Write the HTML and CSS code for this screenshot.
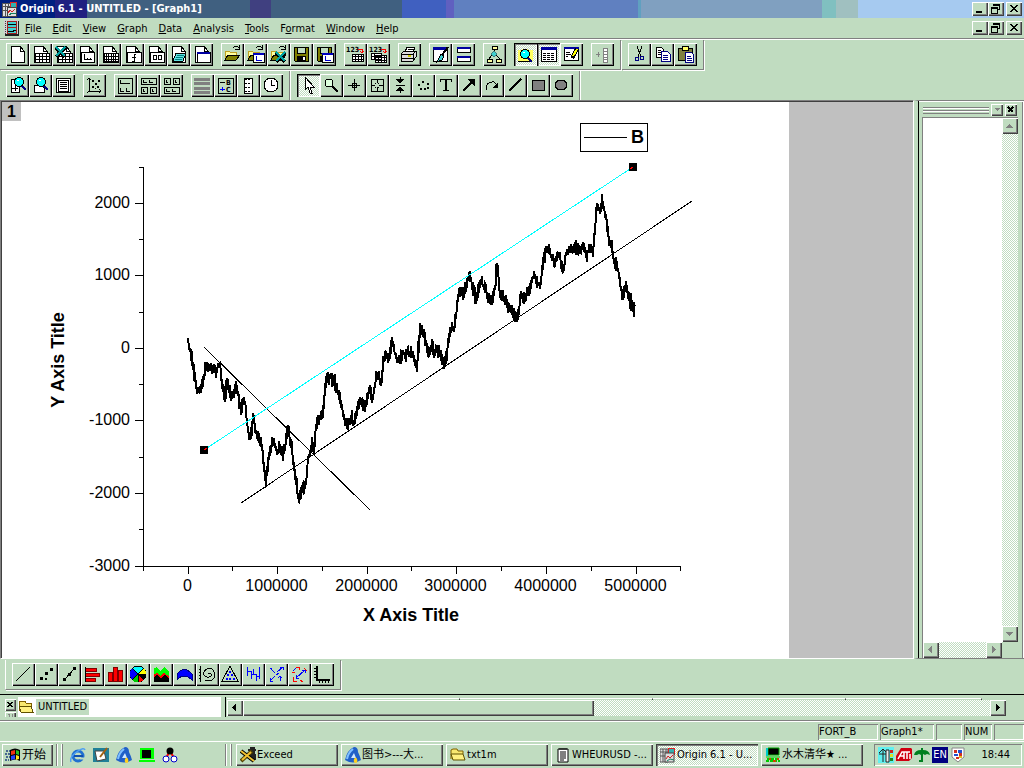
FILE: index.html
```
<!DOCTYPE html>
<html lang="en">
<head>
  <meta charset="UTF-8">
  <title>Origin 6.1 - UNTITLED - [Graph1]</title>
  <link rel="stylesheet" href="styles.css">
</head>
<body>

  <!-- Shared icon shapes -->
  <svg class="sprite" aria-hidden="true">
    <symbol id="page" viewBox="0 0 23 23"><path d="M5 3h9l4 5v11H5z" fill="#fff" stroke="#000"/><path d="M14 3v5h4" fill="none" stroke="#000"/></symbol>
    <symbol id="grid" viewBox="0 0 23 23"><path d="M6 10h14v9H6z" fill="#fff" stroke="#000"/><path d="M6 13h14M6 16h14M10 10v9M13 10v9M17 10v9" stroke="#000"/></symbol>
    <symbol id="folder" viewBox="0 0 23 23"><path d="M4 17V8h4l1 1h6v3" fill="#ffffa0" stroke="#c0a020"/><path d="M4 17l3-5h12l-4 5z" fill="#808000" stroke="#000"/><path d="M12 5q3-4 6 0M18 2v4h-4" fill="none" stroke="#000"/></symbol>
    <symbol id="disk" viewBox="0 0 23 23"><path d="M4 4h14v14H5l-1-1z" fill="#808000" stroke="#000"/><path d="M7 4h8v6H7z" fill="#c0dcc0" stroke="#000"/><path d="M7 13h9v5H7z"/><path d="M13 14h2v3h-2z" fill="#fff"/></symbol>
    <symbol id="plotwin" viewBox="0 0 23 23"><path d="M9 10h11v9H9z" fill="#fff" stroke="#000"/><path d="M9 10h11v2H9z" fill="#0000c0"/><path d="M12 13v4h6" fill="none" stroke="#00c"/></symbol>
    <symbol id="excelx" viewBox="0 0 23 23"><path d="M4 5l9 9M13 5l-9 9" stroke="#000" stroke-width="3"/><path d="M4 4l9 9M13 4l-9 9" stroke="#00a0a0" stroke-width="2"/></symbol>
    <symbol id="lens" viewBox="0 0 23 23"><path d="M15 12l4 4" stroke="#000080" stroke-width="2"/><circle cx="12" cy="8" r="4.500" fill="#0ff" stroke="#000"/><path d="M10 6h2v1h-2z" fill="#fff"/></symbol>
    <symbol id="restore" viewBox="0 0 16 14"><path d="M5 2h6v5h-2M5 2v2" fill="none" stroke="#000"/><path d="M5 2h7v2H5z"/><path d="M3 6h6v5H3z" fill="none" stroke="#000"/><path d="M3 5h7v2H3z"/></symbol>
    <symbol id="cross" viewBox="0 0 16 14"><path d="M4 3l7 7M5 3l7 7M11 3l-7 7M12 3l-7 7" stroke="#000"/></symbol>
    <symbol id="origin" viewBox="0 0 16 16"><path d="M0 2h8v13H0z" fill="#e0e0e0" stroke="#555"/><path d="M0 5h8M0 9h8M3 2v13M6 2v13" stroke="#555"/><path d="M8 1h7v7H8z" fill="#e02020"/><path d="M9 2h5v4H9z" fill="#30b0b0"/><path d="M5 6h9v9H5z" fill="#ddd" stroke="#444"/><path d="M6 12l2-3 2 2 3-3" fill="none" stroke="#d02020"/><path d="M7 14l3-2 4 1" fill="none" stroke="#108060"/></symbol>
    <symbol id="ie" viewBox="0 0 16 16"><circle cx="8" cy="9" r="5" fill="none" stroke="#2070d0" stroke-width="3"/><path d="M4 9h9" stroke="#1050b0" stroke-width="2"/><path d="M10 10.500h6v2h-6z" fill="#c0dcc0"/><path d="M1 15Q-1 10 8 4q6-4 7-1" fill="none" stroke="#50a0f0" stroke-width="1.500"/></symbol>
    <symbol id="tri" viewBox="0 0 16 16"><path d="M9 0q4 0 4 5 2 4 3 8-8 5-16 0Q2 3 9 0z" fill="#2060c8"/><path d="M9 6l2 5H6z" fill="#d0e8ff"/><path d="M8 2Q3 6 2 12" stroke="#80c0ff" stroke-width="2" fill="none"/><path d="M9 12q2-3 3 0t-1 4q-3 0-2-4z" fill="#ffd020"/></symbol>
    <symbol id="openfolder" viewBox="0 0 16 16"><path d="M1 12V3l2-1h4l1 2h5v3" fill="#f8e870" stroke="#806000"/><path d="M3 13L1 7h12l2 6z" fill="#fff080" stroke="#605000"/></symbol>
    <symbol id="terminal" viewBox="0 0 16 16"><path d="M3 1h11v7H3z" fill="#000" stroke="#0a0"/><path d="M1 1h2v8H1z" fill="#0cc"/><path d="M1 10h14" stroke="#0c0"/><path d="M2 12h12M1 14h14" stroke="#0c0" stroke-width="2" stroke-dasharray="3 1"/><path d="M4 12h2M8 14h3M12 12h2" stroke="#c40" stroke-width="2"/></symbol>
  </svg>

  <header class="titlebar">
    <svg class="icon16"><use href="#origin"/></svg>
    <h1>Origin 6.1 - UNTITLED - [Graph1]</h1>
    <div class="winbtns">
      <button aria-label="Minimize"><svg viewBox="0 0 16 14"><path d="M4 9h6v2H4z"/></svg></button>
      <button aria-label="Restore"><svg><use href="#restore"/></svg></button>
      <button class="close" aria-label="Close"><svg><use href="#cross"/></svg></button>
    </div>
  </header>

  <nav class="menubar">
    <svg class="icon16" viewBox="0 0 16 16"><path d="M1 1h15v15H1z" fill="#202020"/><path d="M0 0h14v14H0z" fill="#d0d0d0"/><path d="M3 1h10v13H3z" fill="#a02020"/><path d="M4 2h8v5H4zM4 8h8v5H4z" fill="#40d0d0"/><path d="M4 5l3-1 2 1 3-1M4 11l3 1 5-2" fill="none" stroke="#000"/><path d="M1 1v13" stroke="#404040" stroke-dasharray="1 1"/></svg>
    <button><u>F</u>ile</button>
    <button><u>E</u>dit</button>
    <button><u>V</u>iew</button>
    <button><u>G</u>raph</button>
    <button><u>D</u>ata</button>
    <button><u>A</u>nalysis</button>
    <button><u>T</u>ools</button>
    <button>F<u>o</u>rmat</button>
    <button><u>W</u>indow</button>
    <button><u>H</u>elp</button>
    <div class="winbtns">
      <button aria-label="Minimize graph"><svg viewBox="0 0 16 14"><path d="M4 9h6v2H4z"/></svg></button>
      <button aria-label="Restore graph"><svg><use href="#restore"/></svg></button>
      <button class="close" aria-label="Close graph"><svg><use href="#cross"/></svg></button>
    </div>
  </nav>

  <!-- Standard + edit toolbars -->
  <div class="dock">
    <div class="toolbar">
      <div class="group">
        <button aria-label="New project"><svg><use href="#page"/></svg></button>
        <button aria-label="New worksheet"><svg><use href="#page"/><use href="#grid"/></svg></button>
        <button aria-label="New Excel"><svg><use href="#page"/><use href="#grid"/><use href="#excelx"/></svg></button>
        <button aria-label="New graph"><svg><use href="#page"/><path d="M6 9h13v10H6z" fill="#fff" stroke="#000"/><path d="M9 11v5h8M12 15v1M15 15v1" fill="none" stroke="#000"/></svg></button>
        <button aria-label="New matrix"><svg><use href="#page"/><use href="#grid"/><path d="M8 10v9M15 10v9M6 18h14" stroke="#000"/></svg></button>
        <button aria-label="New function"><svg><use href="#page"/><path d="M6 9h14v10H6z" fill="#fff" stroke="#000"/><path d="M15 11h-2v7h-2M11 14h4" fill="none" stroke="#000"/></svg></button>
        <button aria-label="New layout"><svg><use href="#page"/><path d="M6 9h14v10H6z" fill="#fff" stroke="#000"/><path d="M9 12h3v4H9zM14 12h3v4h-3z" fill="none" stroke="#000"/></svg></button>
        <button aria-label="New notes"><svg><use href="#page"/><path d="M9 10h10l-3 8H6z" fill="#60e0e0" stroke="#000"/><path d="M10 12h7M9 14h7M8 16h7" stroke="#008080"/></svg></button>
        <button aria-label="New window"><svg><use href="#page"/><path d="M7 9h13v10H7z" fill="#fff" stroke="#000"/><path d="M7 9h13v2H7z" fill="#0000a0"/></svg></button>
      </div>
      <div class="group">
        <button aria-label="Open"><svg><use href="#folder"/></svg></button>
        <button aria-label="Open template"><svg><use href="#folder"/><use href="#plotwin"/></svg></button>
        <button aria-label="Open Excel"><svg><use href="#folder"/><use href="#excelx" x="5" y="5"/></svg></button>
        <button aria-label="Save project"><svg><use href="#disk"/></svg></button>
        <button aria-label="Save template"><svg><use href="#disk"/><use href="#plotwin"/></svg></button>
      </div>
      <div class="group">
        <button aria-label="Import ASCII"><svg><text x="2" y="9" class="tiny">123</text><path d="M14 6h4v4M16 8l2 2 2-2" fill="none" stroke="red"/><path d="M8 11h11v7H8zM8 13h11M8 16h11M11 11v7M14 11v7M17 11v7" fill="#fff" stroke="#000"/></svg></button>
        <button aria-label="Import multiple ASCII"><svg><text x="2" y="9" class="tiny">123</text><path d="M14 6h4v4M16 8l2 2 2-2" fill="none" stroke="red"/><path d="M4 10h10v6H4zM4 13h10M7 10v6M8 12h11v7H8zM8 14h11M8 17h11M11 12v7M14 12v7M17 12v7" fill="#fff" stroke="#000"/></svg></button>
      </div>
      <div class="group">
        <button aria-label="Print"><svg><path d="M7 9l2-5h8l-2 5" fill="#fff" stroke="#000"/><path d="M10 6h5" stroke="#000"/><path d="M3 11l3-3h12v6l-3 4H3z" fill="#ddd" stroke="#000"/><path d="M3 11h12l3-3M15 11v7M3 15h12" fill="none" stroke="#000"/><path d="M10 13h3" stroke="#cc0" stroke-width="2"/></svg></button>
      </div>
      <div class="group">
        <button aria-label="Refresh"><svg><path d="M4 4h14v14H4z" fill="#fff" stroke="#000"/><path d="M4 4h14v3H4z" fill="#0000a0"/><path d="M19 4l-6 8" stroke="#000" stroke-width="2"/><path d="M12 11l3 2-2 4-5 2z" fill="#40d0d0" stroke="#000"/></svg></button>
        <button aria-label="Duplicate"><svg><path d="M5 4h13v5H5zM5 13h13v5H5z" fill="#fff" stroke="#000"/><path d="M5 4h13v2H5zM5 13h13v2H5z" fill="#0000a0"/></svg></button>
      </div>
      <div class="group">
        <button aria-label="Custom routine"><svg><path d="M11 6v5M9 12l-3 4M13 12l4 4" stroke="#000"/><path d="M9 3h5v3H9zM4 16h5v3H4zM13 16h5v3h-5z" fill="#ffffa0" stroke="#000"/><path d="M11 8l3 3-3 3-3-3z" fill="#40d0d0" stroke="#408080"/></svg></button>
      </div>
      <div class="group">
        <button class="pressed" aria-label="Project explorer"><svg><path d="M4 7h4V6h5l1 1h5v11H4z" fill="#ffff60"/><path d="M4 18h14" stroke="#000"/><use href="#lens" x="-1" y="3"/></svg></button>
        <button class="pressed" aria-label="Results log"><svg><path d="M4 5h15v13H4z" fill="#fff" stroke="#000"/><path d="M4 4h16v3H4z" fill="#0000a0"/><path d="M6 10h12M6 12h12M6 14h12M6 16h12" stroke="#000" stroke-dasharray="3 1"/></svg></button>
        <button aria-label="Script window"><svg><path d="M4 4h14v13H4z" fill="#fff" stroke="#000"/><path d="M4 4h15v2H4z" fill="#0000a0"/><path d="M6 9h4M6 11h5M6 13h2" stroke="#000"/><path d="M17 6l-5 9" stroke="#000" stroke-width="4"/><path d="M17 6l-4 7" stroke="#ff0" stroke-width="2"/></svg></button>
      </div>
      <div class="group">
        <button aria-label="Add column"><svg><path d="M5 11h4M7 9v5M12 5h4v14h-4zM12 8h4M12 11h4M12 14h4M12 16h4" fill="#fff" stroke="#808080"/></svg></button>
      </div>
    </div>
    <div class="toolbar">
      <div class="group">
        <button aria-label="Cut"><svg><path d="M9 3l4 11M14 3l-4 11" stroke="#000"/><circle cx="9" cy="16" r="2" fill="none" stroke="#000080"/><circle cx="14" cy="15" r="2" fill="none" stroke="#000080"/></svg></button>
        <button aria-label="Copy"><svg><path d="M5 4h5l2 2v8H5z" fill="#fff" stroke="#000"/><path d="M7 7h3M7 9h4M7 11h3" stroke="#000"/><path d="M10 8h6l3 3v7h-9z" fill="#fff" stroke="#000080"/><path d="M12 12h5M12 14h5M12 16h5" stroke="#000080"/></svg></button>
        <button aria-label="Paste"><svg><path d="M4 5h14v12H4z" fill="#808040" stroke="#000"/><path d="M8 3h6v4H8z" fill="#ff6" stroke="#000"/><path d="M11 9h6l2 2v8h-8z" fill="#fff" stroke="#000080"/><path d="M13 13h4M13 15h5M13 17h5" stroke="#000080"/></svg></button>
      </div>
    </div>
  </div>

  <!-- Graph + tools toolbars -->
  <div class="dock last">
    <div class="toolbar">
      <div class="group">
        <button aria-label="Zoom in"><svg><path d="M5 5h8v13H5z" fill="#fff" stroke="#000"/><path d="M6 14h6M9 11v6" stroke="#000"/><use href="#lens" x="1"/></svg></button>
        <button aria-label="Zoom out"><svg><path d="M5 11h7l3 3v4H5z" fill="#fff" stroke="#000"/><use href="#lens"/></svg></button>
        <button aria-label="Whole page"><svg><path d="M4 4h14v14H4z" fill="#fff" stroke="#000"/><path d="M6 6h10v11H6z" fill="none" stroke="#000"/><path d="M8 8h7M8 10h7M8 12h7M8 14h7" stroke="#000"/></svg></button>
      </div>
      <div class="group">
        <button aria-label="Rescale"><svg><path d="M6 4v13h12M4 6l2-2 2 2M16 15l2 2-2 2M6 17l-2 2" fill="none" stroke="#000"/><path d="M9 12h2v2H9zM12 9h2v2h-2zM9 6h2v2H9zM14 12h2v2h-2zM15 6h2v2h-2zM12 14h1v1h-1z"/></svg></button>
      </div>
      <div class="group">
        <button aria-label="Extract layers"><svg><path d="M4 4h14v15H4z" fill="none" stroke="#000"/><path d="M6 6v3h10M6 14v3h4M12 14v3h4" fill="none" stroke="#000"/></svg></button>
        <button aria-label="Extract graphs"><svg><path d="M4 4h15v6H4zM4 13h6v6H4zM13 13h6v6h-6z" fill="none" stroke="#000"/><path d="M6 6v2h4M12 6v2h4M6 15v2h2M15 15v2h2" fill="none" stroke="#000"/></svg></button>
        <button aria-label="Merge graphs"><svg><path d="M4 4h6v6H4zM13 4h6v6h-6zM4 13h15v6H4z" fill="none" stroke="#000"/><path d="M6 6v2h2M15 6v2h2M6 15v2h4M12 15v2h4" fill="none" stroke="#000"/></svg></button>
      </div>
      <div class="group">
        <button aria-label="Color scale"><svg><path d="M3 5h16M3 9h16M3 14h16M3 18h16" stroke="#808080" stroke-width="3"/></svg></button>
        <button aria-label="Legend"><svg><path d="M4 4h15v15H4z" fill="none" stroke="#000"/><path d="M6 8h5" stroke="#000"/><path d="M6 15h5M8 13v4" stroke="#00f"/><text x="12" y="11" class="tiny">B</text><text x="12" y="18" class="tiny">C</text></svg></button>
        <button aria-label="XY scaler"><svg><path d="M7 4h8v15H7z" fill="#fff" stroke="#000"/><path d="M9 5v13M12 5v13" stroke="#000" stroke-width="2" stroke-dasharray="1 3"/></svg></button>
        <button aria-label="Date and time"><svg><circle cx="11" cy="11" r="7" fill="#fff" stroke="#000"/><path d="M11 6v5h4" fill="none" stroke="#000"/></svg></button>
      </div>
    </div>
    <div class="toolbar">
      <div class="group">
        <button class="pressed" aria-label="Pointer"><svg><path d="M8 3v13l3-3 2 6h2l-2-6h4z" fill="#fff" stroke="#000"/></svg></button>
        <button aria-label="Magnifier"><svg><circle cx="9" cy="9" r="4" fill="#dfd" stroke="#000"/><path d="M12 12l6 6" stroke="#000" stroke-width="2"/></svg></button>
        <button aria-label="Screen reader"><svg><path d="M5 11h12M11 5v12" stroke="#000"/><path d="M9 9h4v4H9z" fill="none" stroke="#000"/></svg></button>
        <button aria-label="Data reader"><svg><path d="M5 5h12v12H5zM5 11h4M13 11h4M11 5v4M11 13v4M9 9h1M13 9h-1M9 13h1M13 13h-1" fill="none" stroke="#000"/></svg></button>
        <button aria-label="Data selector"><svg><path d="M11 3v5M11 14v5M7 11h9" stroke="#000"/><path d="M7 5h8l-4 5zM7 17h8l-4-5z"/></svg></button>
        <button aria-label="Draw data"><svg><path d="M6 10h2v2H6zM10 7h2v2h-2zM8 14h2v2H8zM12 14h2v2h-2zM15 9h2v2h-2zM15 13h2v2h-2z"/></svg></button>
        <button aria-label="Text tool"><svg><path d="M5 5h12v3h-1V6h-4v10h2v1H8v-1h2V6H6v2H5z"/></svg></button>
        <button aria-label="Arrow tool"><svg><path d="M5 17L14 8" stroke="#000" stroke-width="2"/><path d="M9 5h8v8z"/></svg></button>
        <button aria-label="Curved arrow tool"><svg><path d="M5 16q0-9 8-8l2 2" fill="none" stroke="#000"/><path d="M17 8v6h-5z"/></svg></button>
        <button aria-label="Line tool"><svg><path d="M5 17L17 5" stroke="#000" stroke-width="1.500"/></svg></button>
        <button aria-label="Rectangle tool"><svg><path d="M5 6h12v10H5z" fill="#808080" stroke="#000"/></svg></button>
        <button aria-label="Circle tool"><svg><ellipse cx="11" cy="11" rx="6" ry="5" fill="#808080" stroke="#000"/></svg></button>
      </div>
    </div>
  </div>

  <main class="workspace">
    <div class="mdi">
      <svg class="graph" viewBox="2 102 787 556">
        <rect x="2" y="102" width="19" height="19" fill="#c0c0c0"/>
        <text x="7" y="117" class="layer">1</text>

        <path class="line" d="M143.500 167v400M143 566.500h538"/>
        <path class="line" id="ticks"/>
        <g id="labels"></g>
        <text class="title" x="411" y="621" text-anchor="middle">X Axis Title</text>
        <text class="title" transform="translate(64 360) rotate(-90)" text-anchor="middle">Y Axis Title</text>

        <path class="data" id="series"/>
        <path class="line" d="M204 347L370 510M241 503L692 201"/>
        <path class="line cyan" d="M204 450L633 167"/>
        <path d="M200 446h8v8h-8zM629 163h8v8h-8z"/>
        <path d="M204 450l3-2M630 169l3-2" stroke="red"/>

        <rect class="line" x="580.500" y="123.500" width="67" height="28"/>
        <path class="line" d="M584 137.500h43"/>
        <text class="title" x="631" y="143">B</text>
      </svg>
    </div>

    <aside class="panel">
      <div class="grip">
        <span class="bars"></span>
        <button class="mini" aria-label="Panel menu"><svg viewBox="0 0 12 12"><path d="M3 4h6L6 7z" fill="#808080"/></svg></button>
        <button class="mini" aria-label="Close panel"><svg viewBox="0 0 12 12"><path d="M3 3l5 5M8 3L3 8" stroke="#000" stroke-width="2"/></svg></button>
      </div>
      <div class="log">
        <div class="page"></div>
        <div class="scroll vertical">
          <button class="arrow" aria-label="Scroll up"><svg viewBox="0 0 16 16"><path d="M4 10h7L7.500 6z" fill="#808080"/></svg></button>
          <button class="arrow" aria-label="Scroll down"><svg viewBox="0 0 16 16"><path d="M4 6h7l-3.500 4z" fill="#808080"/></svg></button>
        </div>
        <div class="scroll">
          <button class="arrow" aria-label="Scroll left"><svg viewBox="0 0 16 16"><path d="M9 4v7L5 7.500z" fill="#808080"/></svg></button>
          <button class="arrow" aria-label="Scroll right"><svg viewBox="0 0 16 16"><path d="M6 4v7l4-3.500z" fill="#808080"/></svg></button>
        </div>
      </div>
    </aside>
  </main>

  <!-- 2D graph toolbar -->
  <div class="plotbar">
    <div class="toolbar">
      <div class="group">
        <button aria-label="Line"><svg><path d="M4 18L18 4" stroke="#000"/></svg></button>
        <button aria-label="Scatter"><svg><path d="M5 14h3v3H5zM10 9h3v3h-3zM10 15h2v2h-2zM15 5h3v3h-3z"/></svg></button>
        <button aria-label="Line and symbol"><svg><path d="M6 17L17 5" stroke="#000"/><path d="M5 15h3v3H5zM10 10h3v3h-3zM15 4h3v3h-3z"/></svg></button>
        <button aria-label="Bar"><svg><path d="M4 5h11v3H4zM4 10h14v3H4zM4 15h10v3H4z" fill="red" stroke="#800000"/><path d="M4 4v15" stroke="#000"/></svg></button>
        <button aria-label="Column"><svg><path d="M4 9h4v9H4zM9 4h4v14H9zM14 7h4v11h-4z" fill="red" stroke="#800000"/></svg></button>
        <button aria-label="Pie"><svg><circle cx="11" cy="11" r="8" fill="#0ff" stroke="#000"/><path d="M11 11L5 5Q1 11 5 17z" fill="#00f"/><path d="M11 11l-6 6q3 3 6 2z" fill="#0c0"/><path d="M11 11v8q4 0 6-3z" fill="red"/><path d="M11 11h8q-1 4-3 5z" fill="#000"/><path d="M11 11h8q0-4-2-6z" fill="#ff0"/><path d="M5 5l12 12M17 5L5 17M11 11h8M11 11v8" stroke="#000"/></svg></button>
        <button aria-label="Area"><svg><path d="M4 5l3-1 3 4 4-4 5 5v9H4z" fill="#0f0"/><path d="M4 11l3-1 3 3 4-3 5 3v3H4z" fill="red"/><path d="M4 14l3-2 4 3 4-3 4 4v3H4z" fill="#000"/></svg></button>
        <button aria-label="Fill area"><svg><path d="M4 11q7-9 15 0v6q-8-8-15 0z" fill="#00f" stroke="#000080"/></svg></button>
        <button aria-label="Polar"><svg><path d="M4 3v16M3 6h2M3 9h2M3 12h2M3 15h2" stroke="#000"/><path d="M12 11q2-2 3 0t-2 3-5-2 3-6 7 3-2 8-7 0" fill="none" stroke="#000"/></svg></button>
        <button aria-label="Ternary"><svg><path d="M11 3l8 15H3z" fill="none" stroke="#000"/><path d="M10 8h2v2h-2zM8 11h2v2H8zM12 11h2v2h-2zM7 15h2v2H7zM10 15h2v2h-2zM14 15h2v2h-2z" fill="#00f"/></svg></button>
        <button aria-label="High low close"><svg><path d="M5 4v9M5 8h4v8M9 11h2V6M11 11h3v7M14 13h3V4M17 8v8" fill="none" stroke="#00f"/></svg></button>
        <button aria-label="Vector XYAM"><svg><path d="M5 5l5 5M5 18l5-5M12 9l6-5M15 18v-5M5 18v-3M5 18h3M5 5h2M18 4h-3M18 4v3M13 15l2-2 2 2M11 12l3-2" fill="none" stroke="#00f"/></svg></button>
        <button aria-label="Vector XYXY"><svg><path d="M8 15l9-8M8 15v-3M8 15h3M17 7h-3M17 7v3M5 8l4-4" fill="none" stroke="#00f"/><path d="M4 9h3M8 4h3M11 4v3M5 14v4h4M16 5l3 3M12 17l3 2" fill="none" stroke="red"/></svg></button>
        <button aria-label="Template"><svg><path d="M6 3v14h13" fill="none" stroke="#000" stroke-width="2"/><path d="M3 5h2M3 8h2M3 11h2M3 14h2M8 18v2M11 18v2M14 18v2M17 18v2" stroke="#000"/></svg></button>
      </div>
    </div>
  </div>

  <section class="project">
    <div class="handles">
      <button class="mini" aria-label="Close explorer"><svg viewBox="0 0 12 12"><path d="M3 3l5 5M8 3L3 8" stroke="#000" stroke-width="2"/></svg></button>
      <button class="mini" aria-label="Dock explorer"><svg viewBox="0 0 12 12"><path d="M3 2h2v8M8 2v8" fill="none" stroke="#808080"/></svg></button>
    </div>
    <div class="tree">
      <svg class="icon16"><use href="#openfolder"/></svg>
      <span>UNTITLED</span>
    </div>
    <div class="list">
      <div class="columns"><i class="wide"></i><i></i><i></i><i class="narrow"></i></div>
      <div class="scroll">
        <button class="arrow" aria-label="List left"><svg viewBox="0 0 16 16"><path d="M9 4v7L5 7.500z"/></svg></button>
        <div class="thumb"></div>
        <button class="arrow" aria-label="List right"><svg viewBox="0 0 16 16"><path d="M6 4v7l4-3.500z"/></svg></button>
      </div>
    </div>
  </section>

  <footer class="status">
    <span class="w60">FORT_B</span>
    <span class="w53">Graph1*</span>
    <span class="w26"></span>
    <span class="w28">NUM</span>
    <span class="w30"></span>
  </footer>

  <div class="taskbar">
    <button class="start"><svg class="icon16" viewBox="0 0 16 16"><path d="M1 4h4M0 7h5M1 10h4M0 13h4" stroke="#204080" stroke-width="1.500" stroke-dasharray="2 1"/><path d="M5 3q5-3 10 0v11q-5-3-10 0z"/><path d="M6 4l4-1v4L6 8z" fill="#f03010"/><path d="M11 3l3 1v4l-3-1z" fill="#20c020"/><path d="M6 9l4-1v4l-4 1z" fill="#2040ff"/><path d="M11 8l3 1v3l-3 1z" fill="#ffe020"/></svg>开始</button>
    <div class="quick">
      <button aria-label="Internet Explorer"><svg class="icon16"><use href="#ie"/></svg></button>
      <button aria-label="Show desktop"><svg class="icon16" viewBox="0 0 16 16"><path d="M0 1h16v14H0z" fill="#208098"/><path d="M2 4h9l2 8-9 2z" fill="#fff" stroke="#444"/><path d="M14 1L7 10" stroke="#a06010" stroke-width="2"/></svg></button>
      <button aria-label="Browser"><svg class="icon16"><use href="#tri"/></svg></button>
      <button aria-label="Console"><svg class="icon16" viewBox="0 0 16 16"><path d="M1 1h14v11H1zM0 13h16v2H0z" fill="#0f0"/><path d="M3 3h9v8H3z"/></svg></button>
      <button aria-label="Network"><svg class="icon16" viewBox="0 0 16 16"><path d="M8 4l-4 7M8 4l4 7" stroke="red" stroke-width="2"/><circle cx="8" cy="4" r="3.500"/><circle cx="4" cy="12" r="3" fill="#fff" stroke="#00c"/><circle cx="12" cy="12" r="3" fill="#fff" stroke="#00c"/></svg></button>
    </div>
    <div class="tasks">
      <button><svg class="icon16" viewBox="0 0 16 16"><path d="M8 2h2V0h5v2h1v2h-1v3h1v6H9V7h1V4H8z" fill="#222"/><path d="M1 14L12 4" stroke="#504000" stroke-width="4"/><path d="M1 4l13 10" stroke="#000" stroke-width="4"/><path d="M1 4l13 10M2 13l9-8" stroke="#f0c030" stroke-width="2"/></svg><span>Exceed</span></button>
      <button><svg class="icon16"><use href="#tri"/></svg><span>图书&gt;---大...</span></button>
      <button><svg class="icon16"><use href="#openfolder"/></svg><span>txt1m</span></button>
      <button><svg class="icon16" viewBox="0 0 16 16"><path d="M3 2h10v13H3z" fill="#fff" stroke="#000"/><path d="M5 1v2M7 1v2M9 1v2M11 1v2M5 5h6M5 7h6M5 9h6M5 11h6M5 13h4" stroke="#000"/></svg><span>WHEURUSD -...</span></button>
      <button class="active"><svg class="icon16"><use href="#origin"/></svg><span>Origin 6.1 - U...</span></button>
      <button><svg class="icon16"><use href="#terminal"/></svg><span>水木清华★ ...</span></button>
    </div>
    <div class="tray">
      <svg class="icon16" viewBox="0 0 16 16"><path d="M0 0h16v16H0z" fill="#60f0f0"/><path d="M1 6l4-4 4 4M5 3v12M1 7h8" fill="none" stroke="#222"/><path d="M8 3h3v12H8z" fill="#eee" stroke="#222"/><path d="M12 3h3v3h-3z" fill="#d02020"/><path d="M12 7h3v3h-3z" fill="#e0e020"/><path d="M12 11h3v3h-3z" fill="#208020"/></svg>
      <svg class="icon16" viewBox="0 0 16 16"><path d="M5 1h10l1 1v9l-3 3H0V9z" fill="#d00010"/><path d="M2 12l4-7h2v7M4 9h4M8 5h6M11 5v7M14 7v5" fill="none" stroke="#fff" stroke-width="1.500"/></svg>
      <svg class="icon16" viewBox="0 0 16 16"><path d="M0 8q1-5 7-5V1h2v2q6 0 7 5l-3-1-2 1-2-1-2 1-2-1-2 1z" fill="#008020"/><path d="M8 7v7h-3" fill="none" stroke="#008020" stroke-width="2"/></svg>
      <b>EN</b>
      <svg class="icon16" viewBox="0 0 16 16"><path d="M2 1h12v9l-6 5-6-5z" fill="#fff" stroke="#888"/><path d="M4 3h3v3H4zM9 6h3v3H9zM6 10h3v2H6z" fill="#d03020"/><path d="M8 3h4v3H8zM4 7h4v2H4z" fill="#2050d0"/><path d="M9 9h3v2H9z" fill="#e0c020"/></svg>
      <time>18:44</time>
    </div>
  </div>

  <script src="graph.js"></script>
</body>
</html>
```

FILE: styles.css
```
* {
  box-sizing: border-box;
}

body {
  margin: 0;
  height: 100vh;
  display: flex;
  flex-direction: column;
  overflow: hidden;
  background: #c0dcc0;
  font: 11px/14px "DejaVu Sans Condensed", "Noto Sans CJK SC", sans-serif;
  color: #000;
}

button {
  margin: 0;
  padding: 0;
  border: 0;
  background: #c0dcc0;
  font: inherit;
  color: inherit;
  flex: none;
}

svg {
  display: block;
  fill: #000;
  shape-rendering: crispEdges;
}

.sprite {
  position: absolute;
  width: 0;
  height: 0;
}

.icon16 {
  width: 16px;
  height: 16px;
  flex: none;
}

.tiny {
  font: bold 7px "DejaVu Sans Condensed", sans-serif;
}

/* title and menu */
.titlebar {
  flex: none;
  height: 18px;
  padding: 0 2px;
  display: flex;
  align-items: center;
  gap: 2px;
  color: #fff;
  background: linear-gradient(90deg,
    #002080 0 55px, #202080 55px 87px, #406080 87px 250px, #404080 250px 271px,
    #406080 271px 402px, #4060c0 402px 446px, #6060c0 446px 454px, #6080c0 454px 638px,
    #60a0c0 638px 641px, #80a0c0 641px 822px, #80c0c0 822px 836px, #a0c0c0 836px 858px,
    #a6caf0 858px);
}

.titlebar h1 {
  margin: 0;
  font-size: 11px;
  font-weight: bold;
}

.winbtns {
  margin-left: auto;
  display: flex;
}

.winbtns button,
.winbtns svg {
  width: 16px;
  height: 14px;
}

.winbtns .close {
  margin-left: 2px;
}

.winbtns button,
.mini,
.arrow,
.thumb,
.start,
.tasks button {
  background: #c0dcc0;
  box-shadow: inset 1px 1px #fff, inset -1px -1px #404040, inset -2px -2px #808080;
}

.menubar {
  flex: none;
  height: 20px;
  padding: 0 2px 0 4px;
  display: flex;
  align-items: center;
}

.menubar > button {
  padding: 1px 5px 0 6px;
}

.menubar > .icon16 {
  margin-right: -1px;
}

/* toolbars */
.dock {
  flex: none;
  display: flex;
  padding-top: 1px;
}

.dock:not(.last) {
  border-top: 1px solid #808080;
  box-shadow: inset 0 1px #fff;
}

.dock .toolbar {
  border-bottom: 1px solid #808080;
}

.dock.last .toolbar {
  border-bottom: 0;
}

.toolbar {
  display: flex;
  gap: 8px;
  padding: 3px 6px;
  margin-right: 1px;
  border-right: 1px solid #808080;
  box-shadow: 1px 1px #fff;
}

.dock.last .toolbar {
  box-shadow: 1px 0 #fff;
}

.group {
  display: flex;
}

.group button,
.group button > svg {
  width: 23px;
  height: 23px;
}

.group button {
  box-shadow: inset 1px 1px #fff, inset -1px -1px #000, inset -2px -2px #808080;
}

.group .pressed,
.tasks .active,
.scroll {
  background: repeating-conic-gradient(#fff 0 25%, #c0dcc0 0 50%) 0 0 / 2px 2px;
}

.group .pressed {
  box-shadow: inset 1px 1px #000, inset 2px 2px #808080, inset -1px -1px #fff;
}

/* graph window */
.workspace {
  flex: 1;
  min-height: 0;
  display: flex;
}

.mdi {
  flex: 1;
  min-width: 0;
  display: flex;
  padding: 1px 0 0 1px;
  background: #c0c0c0;
  border: 1px solid #fff;
  border-top-color: #808080;
  border-left-color: #808080;
  box-shadow: inset 1px 1px #404040;
}

.graph {
  height: 100%;
  aspect-ratio: 787 / 556;
  background: #fff;
  font: 16px "Liberation Sans", Arial, sans-serif;
}

.graph .layer {
  font-weight: bold;
}

.graph .title {
  font-size: 18px;
  font-weight: bold;
}

.line {
  fill: none;
  stroke: #000;
}

.cyan {
  stroke: #0ff;
}

.data {
  fill: none;
  stroke: #000;
  stroke-width: 2px;
}

/* results log */
.panel {
  flex: none;
  width: 110px;
  display: flex;
  flex-direction: column;
  gap: 1px;
  padding: 3px 6px 0 4px;
  border-top: 1px solid #808080;
  border-left: 4px solid #c0dcc0;
  border-bottom: 1px solid #808080;
  box-shadow: inset 1px 0 #000, inset 0 1px #fff, inset -1px 0 #fff, inset -2px 0 #808080;
}

.grip {
  display: flex;
  align-items: center;
  gap: 2px;
  padding: 0 1px;
}

.bars {
  flex: 1;
  height: 7px;
  border: solid #808080;
  border-width: 1px 0;
  background: linear-gradient(#fff 0 1px, #c0dcc0 1px 2px, #808080 2px 3px, #fff 3px 4px, #c0dcc0 4px);
}

.mini,
.mini svg {
  width: 12px;
  height: 12px;
}

.log {
  flex: 1;
  min-height: 0;
  display: grid;
  grid-template: 1fr 16px / 1fr 16px;
  border: solid #808080;
  border-width: 1px 0 0 1px;
}

.page {
  background: #fff;
}

.scroll {
  display: flex;
  justify-content: space-between;
}

.vertical {
  flex-direction: column;
}

.arrow,
.arrow svg {
  width: 16px;
  height: 16px;
}

/* plot types */
.plotbar {
  flex: none;
  display: flex;
  height: 36px;
  padding: 1px 5px 4px;
  border-bottom: 1px solid #000;
}

.plotbar .toolbar {
  border-left: 1px solid #fff;
  border-bottom: 1px solid #808080;
}

/* project explorer */
.project {
  flex: none;
  height: 25px;
  padding: 2px 18px 3px 5px;
  display: flex;
  overflow: hidden;
}

.handles {
  display: flex;
  flex-direction: column;
  gap: 1px;
  width: 13px;
  padding-top: 2px;
  overflow: hidden;
}

.handles .mini,
.handles svg {
  width: 11px;
}

.tree {
  display: flex;
  align-items: center;
  width: 203px;
  background: #fff;
}

.tree span {
  margin-left: 2px;
  padding: 1px 2px;
  background: #c0dcc0;
}

.list {
  flex: 1;
  margin-left: 4px;
  padding-left: 1px;
  border-left: 1px solid #000;
}

.columns {
  display: flex;
  height: 3px;
  padding-right: 24px;
  border-top: 1px solid #c0dcc0;
}

.columns i {
  flex: 193;
  border-top: 1px solid #fff;
  border-right: 1px solid #404040;
}

.columns .wide {
  flex: 233;
}

.columns .narrow {
  flex: 136;
}

.thumb {
  width: 351px;
  height: 16px;
  margin-right: auto;
}

/* status bar */
.status {
  flex: none;
  height: 21px;
  padding: 3px 0 1px;
  display: flex;
  justify-content: flex-end;
  gap: 2px;
  border-top: 1px solid #808080;
  box-shadow: inset 0 1px #fff;
}

.status span {
  padding: 1px;
  box-shadow: inset 1px 1px #808080, inset -1px -1px #fff;
}

.w60 { width: 60px; }
.w53 { width: 54px; }
.w26 { width: 26px; }
.w28 { width: 28px; }
.w30 { width: 30px; }

/* taskbar */
.taskbar {
  flex: none;
  height: 27px;
  padding: 2px;
  display: flex;
  border-top: 1px solid #fff;
}

.taskbar svg {
  shape-rendering: auto;
}

.taskbar button {
  display: flex;
  align-items: center;
}

.start {
  width: 51px;
  padding: 0 3px;
  gap: 1px;
  font-size: 12px;
}

.quick {
  display: flex;
  align-items: center;
  gap: 7px;
  width: 170px;
  margin-left: 3px;
  padding-left: 13px;
  border-left: 1px solid #808080;
  border-right: 1px solid #808080;
  box-shadow: inset 1px 0 #fff, inset 4px 0 #c0dcc0, inset 5px 0 #fff, inset 6px 0 #808080, 1px 0 #fff, 4px 0 #c0dcc0, 5px 0 #fff, 6px 0 #808080;
}

.tasks {
  flex: 1;
  min-width: 0;
  display: flex;
  gap: 3px;
  margin: 0 11px 0 10px;
}

.tasks button {
  flex: 1;
  min-width: 0;
  padding: 0 4px;
  gap: 1px;
  white-space: nowrap;
}

.tasks span {
  overflow: hidden;
}

.tasks .active {
  box-shadow: inset 1px 1px #404040, inset 2px 2px #808080, inset -1px -1px #fff;
}

.tray {
  width: 148px;
  padding: 0 12px 0 4px;
  display: flex;
  align-items: center;
  gap: 2px;
  box-shadow: inset 1px 1px #808080, inset -1px -1px #fff;
}

.tray b {
  width: 16px;
  height: 16px;
  background: #000080;
  color: #fff;
  font-weight: normal;
  line-height: 16px;
  text-align: center;
}

.tray time {
  margin-left: auto;
}
```

FILE: graph.js
```
const NS = "http://www.w3.org/2000/svg";
const labels = document.getElementById("labels");

function addLabel(text, x, y, anchor) {
  const t = document.createElementNS(NS, "text");
  t.setAttribute("x", x);
  t.setAttribute("y", y);
  t.setAttribute("text-anchor", anchor);
  t.textContent = text;
  labels.appendChild(t);
}

// axis ticks, minor ones halfway between the labels
let ticks = "";
for (let i = 0; i < 12; i++) {
  const y = Math.floor(167 + i * 36.28) + 0.5;
  const major = i % 2 === 1;
  ticks += `M143 ${y}h${major ? -8 : -4}`;
  if (major) addLabel(2000 - (i - 1) * 500, 130, y + 4, "end");
}
for (let i = 0; i < 13; i++) {
  const x = Math.floor(143.2 + i * 44.8) + 0.5;
  const major = i % 2 === 1;
  ticks += `M${x} 567v${major ? 7 : 4}`;
  if (major) addLabel((i - 1) * 500000, x - 1, 591, "middle");
}
document.getElementById("ticks").setAttribute("d", ticks);

// turning points of the series
const points = [
  [188,342],[190,348],[192,357],[194,372],[196,385],[197,391],[200,386],[202,388],[204,373],[207,366],
  [209,369],[212,365],[215,370],[218,366],[220,366],[222,377],[223,392],[225,400],[227,380],[230,396],
  [233,392],[237,384],[239,400],[241,412],[244,396],[247,420],[250,438],[254,418],[257,438],[262,446],
  [264,463],[266,482],[269,455],[273,441],[276,452],[280,446],[283,455],[287,433],[289,429],[292,453],
  [295,473],[299,500],[303,487],[306,489],[308,457],[312,443],[314,450],[317,423],[322,417],[324,407],
  [325,385],[327,378],[331,380],[335,383],[340,400],[343,413],[347,426],[352,417],[354,421],[360,402],
  [364,406],[370,391],[373,397],[376,376],[379,376],[381,388],[383,363],[385,353],[389,357],[392,343],
  [394,345],[396,358],[403,356],[409,351],[414,358],[417,365],[420,329],[424,335],[427,352],[430,354],
  [432,346],[435,353],[438,350],[444,361],[447,356],[449,337],[452,325],[454,329],[457,307],[459,289],
  [463,295],[468,276],[472,282],[476,299],[480,284],[482,280],[487,294],[491,306],[495,285],[497,261],
  [500,293],[507,304],[515,315],[518,320],[521,294],[525,299],[530,290],[534,272],[539,288],[543,267],
  [546,248],[552,256],[555,265],[558,252],[563,272],[567,252],[575,245],[580,249],[584,245],[587,255],
  [590,243],[593,253],[596,220],[597,204],[600,213],[602,202],[604,207],[608,233],[610,248],[612,245],
  [615,271],[617,260],[622,296],[626,284],[630,300],[634,312],[635,308]
];

// fixed seed so the noise is the same on every load
let seed = 7;
function noise() {
  seed = (seed * 16807) % 2147483647;
  return seed / 2147483647 - 0.5;
}

let d = "";
for (let i = 0; i < points.length - 1; i++) {
  const [x0, y0] = points[i];
  const [x1, y1] = points[i + 1];
  const steps = (x1 - x0) * 3;
  for (let s = 0; s < steps; s++) {
    const x = x0 + (x1 - x0) * s / steps;
    const y = y0 + (y1 - y0) * s / steps + noise() * 11 + noise() * 7;
    d += (d ? "L" : "M") + x.toFixed(1) + " " + y.toFixed(1);
  }
}
document.getElementById("series").setAttribute("d", d);
```
